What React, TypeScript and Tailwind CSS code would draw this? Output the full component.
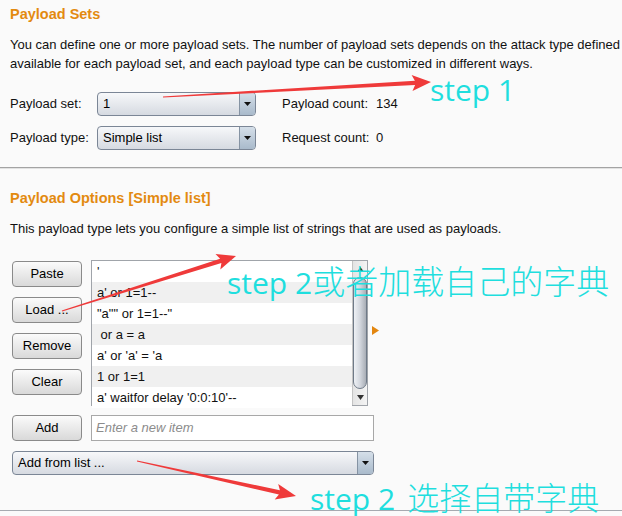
import React from "react";

function arrowPoints(
  x1: number, y1: number, x2: number, y2: number,
  hl: number, hw: number, sw0: number, sw1: number
) {
  const dx = x2 - x1, dy = y2 - y1;
  const len = Math.hypot(dx, dy);
  const ux = dx / len, uy = dy / len;
  const nx = -uy, ny = ux;
  const bx = x2 - ux * hl, by = y2 - uy * hl;
  const bbx = x2 - ux * (hl + 3), bby = y2 - uy * (hl + 3);
  const pts: [number, number][] = [
    [x1 + nx * sw0, y1 + ny * sw0],
    [bx + nx * sw1, by + ny * sw1],
    [bbx + nx * hw, bby + ny * hw],
    [x2, y2],
    [bbx - nx * hw, bby - ny * hw],
    [bx - nx * sw1, by - ny * sw1],
    [x1 - nx * sw0, y1 - ny * sw0],
  ];
  return pts.map((p) => `${p[0].toFixed(1)},${p[1].toFixed(1)}`).join(" ");
}

function Dropdown({ value, className }: { value: string; className: string }) {
  return (
    <div
      className={`flex h-[24px] items-stretch overflow-hidden rounded-[4px] border border-[#7b8696] bg-gradient-to-b from-[#f7f8fa] to-[#d6dae1] ${className}`}
    >
      <div className="flex flex-1 items-center pl-[5px] text-[13px] text-black">{value}</div>
      <div className="flex w-[16px] items-center justify-center border-l border-[#8593a3] bg-gradient-to-b from-[#d5dfe9] to-[#a9bacb]">
        <svg width="7" height="4" viewBox="0 0 7 4">
          <polygon points="0,0 7,0 3.5,4" fill="#111" />
        </svg>
      </div>
    </div>
  );
}

function Btn({ label }: { label: string }) {
  return (
    <div className="flex h-[26px] w-[70px] items-center justify-center rounded-[4px] border border-[#8a8a8a] bg-gradient-to-b from-[#fbfbfb] to-[#d9d9d9] text-[13px] text-black">
      {label}
    </div>
  );
}

const items = [
  "'",
  "a' or 1=1--",
  "\"a\"\" or 1=1--\"",
  "\u00a0or a = a",
  "a' or 'a' = 'a",
  "1 or 1=1",
  "a' waitfor delay '0:0:10'--",
];

export default function App() {
  return (
    <div className="relative h-[516px] w-[622px] overflow-hidden bg-[#fafafa] font-['Liberation_Sans',Arial,sans-serif] text-[13px] text-[#111]">
      {/* Section 1 */}
      <div className="px-[10px] pt-[6px]">
        <div className="h-[16px] whitespace-nowrap text-[14.5px] font-bold leading-[16px] text-[#e38a10]">Payload Sets</div>
        <div className="mt-[13px] whitespace-nowrap leading-[19px]">
          <div>You can define one or more payload sets. The number of payload sets depends on the attack type defined</div>
          <div>available for each payload set, and each payload type can be customized in different ways.</div>
        </div>
        <div className="mt-[19px] flex flex-col gap-[10px]">
          <div className="flex items-center">
            <div className="w-[87px]">Payload set:</div>
            <Dropdown value="1" className="w-[159px]" />
            <div className="ml-[26px] w-[94px]">Payload count:</div>
            <div>134</div>
          </div>
          <div className="flex items-center">
            <div className="w-[87px]">Payload type:</div>
            <Dropdown value="Simple list" className="w-[159px]" />
            <div className="ml-[26px] w-[94px]">Request count:</div>
            <div>0</div>
          </div>
        </div>
      </div>
      <div className="mt-[17px] h-[1px] bg-[#a3a3a3]" />
      <div className="h-[1px] bg-[#e2e2e2]" />

      {/* Section 2 */}
      <div className="px-[10px] pt-[21px]">
        <div className="h-[16px] whitespace-nowrap text-[14.5px] font-bold leading-[16px] text-[#e38a10]">Payload Options [Simple list]</div>
        <div className="mt-[13px] whitespace-nowrap leading-[19px]">
          This payload type lets you configure a simple list of strings that are used as payloads.
        </div>
        <div className="mt-[22px] flex items-start">
          <div className="ml-[2px] flex flex-col gap-[10px] pt-[1px]">
            <Btn label="Paste" />
            <Btn label="Load ..." />
            <Btn label="Remove" />
            <Btn label="Clear" />
          </div>
          <div className="ml-[9px] flex h-[146px] w-[277px] border border-[#a0a4aa] bg-white">
            <div className="flex-1">
              {items.map((it, i) => (
                <div
                  key={i}
                  className={`flex h-[21px] items-center whitespace-pre pl-[5px] ${i % 2 === 1 ? "bg-[#f0f0f0]" : "bg-white"}`}
                >
                  {it}
                </div>
              ))}
            </div>
            <div className="flex w-[15px] flex-col border-l border-[#c4c4c4] bg-gradient-to-r from-[#e4e4e4] to-[#f4f4f4]">
              <div className="flex h-[16px] items-center justify-center">
                <svg width="7" height="5" viewBox="0 0 7 5">
                  <polygon points="3.5,0 7,5 0,5" fill="#333" />
                </svg>
              </div>
              <div className="flex-1 rounded-[7px] border border-[#6f7a88] bg-gradient-to-r from-[#eef1f5] via-[#d3d7de] to-[#a9aeb6]" />
              <div className="flex h-[16px] items-center justify-center">
                <svg width="7" height="5" viewBox="0 0 7 5">
                  <polygon points="0,0 7,0 3.5,5" fill="#333" />
                </svg>
              </div>
            </div>
          </div>
          <div className="ml-[4px] mt-[66px]">
            <svg width="7" height="9" viewBox="0 0 7 9">
              <polygon points="0,0 7,4.5 0,9" fill="#e3860f" />
            </svg>
          </div>
        </div>
        <div className="mt-[9px] flex items-center">
          <div className="ml-[2px]">
            <Btn label="Add" />
          </div>
          <div className="ml-[9px] flex h-[26px] w-[283px] items-center border border-[#a8a8a8] bg-white pl-[4px] italic text-[#8c8c8c]">
            Enter a new item
          </div>
        </div>
        <div className="ml-[2px] mt-[10px]">
          <Dropdown value="Add from list ..." className="w-[362px]" />
        </div>
      </div>
      <div className="absolute left-0 top-[510px] h-[1px] w-full bg-[#a6aab0]" />

      {/* Annotations overlay */}
      <svg className="pointer-events-none absolute left-0 top-0" width="622" height="516" viewBox="0 0 622 516">
        <polygon points={arrowPoints(163, 97, 431, 82, 16, 8, 0.6, 2.2)} fill="#ef3a3a" />
        <polygon points={arrowPoints(62, 311, 236, 256, 16, 8, 0.6, 2.2)} fill="#ef3a3a" />
        <polygon points={arrowPoints(137, 461, 296, 496, 17, 8, 0.6, 2.2)} fill="#ef3a3a" />
      </svg>
      <div className="pointer-events-none absolute left-[430px] top-[75px] whitespace-nowrap font-['Open_Sans','Noto_Sans_CJK_SC',sans-serif] text-[30px] leading-none text-[#1fdede]">
        step 1
      </div>
      <div className="pointer-events-none absolute left-[227px] top-[264px] flex items-baseline whitespace-nowrap font-['Open_Sans','Noto_Sans_CJK_SC',sans-serif] text-[30px] leading-none text-[#1fdede]">
        <span>step 2</span>
        <span className="font-['Noto_Sans_CJK_SC',sans-serif] text-[33px] font-light">或者加载自己的字典</span>
      </div>
      <div className="pointer-events-none absolute left-[310px] top-[480px] flex items-baseline whitespace-nowrap font-['Open_Sans','Noto_Sans_CJK_SC',sans-serif] text-[30px] leading-none text-[#1fdede]">
        <span>step 2</span>
        <span className="ml-[12px] font-['Noto_Sans_CJK_SC',sans-serif] text-[32px] font-light">选择自带字典</span>
      </div>
    </div>
  );
}
